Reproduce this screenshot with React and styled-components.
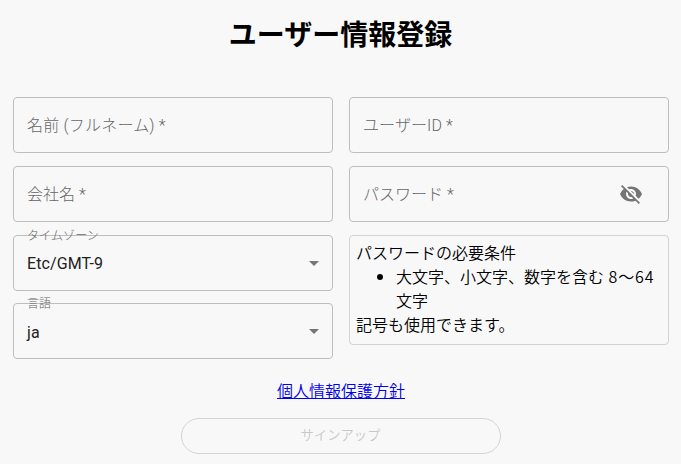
import React, { useState } from "react";
import styled, { createGlobalStyle } from "styled-components";
import { MdVisibilityOff, MdArrowDropDown } from "react-icons/md";

const GlobalStyle = createGlobalStyle`
  body {
    margin: 0;
    background: #f8f8f8;
    font-family: "Noto Sans CJK JP", sans-serif;
    font-size: 16px;
    font-weight: 350;
    line-height: 24px;
    color: #000;
  }
  * {
    box-sizing: border-box;
  }
`;

const Page = styled.div`
  display: flex;
  flex-direction: column;
  align-items: center;
  height: 464px;
  overflow: hidden;
`;

const Title = styled.h1`
  margin: 12px 0 0;
  height: 85px;
  font-size: 28px;
  line-height: 42px;
  font-weight: 700;
`;

const Columns = styled.div`
  display: grid;
  grid-template-columns: 320px 320px;
  gap: 16px;
  width: 656px;
  margin-left: 1px;
`;

const Column = styled.div`
  display: flex;
  flex-direction: column;
  align-items: stretch;
  gap: 13px;
`;

const Field = styled.div`
  position: relative;
  display: flex;
  align-items: center;
  justify-content: space-between;
  height: 56px;
  padding: 0 ${(props) => props.$end || 14}px 0 13px;
  margin-top: ${(props) => props.$shift || 0}px;
  border: 1px solid #bebebe;
  border-radius: 4px;
`;

const Placeholder = styled.label`
  font-family: Roboto, "Noto Sans CJK JP", sans-serif;
  font-weight: 300;
  line-height: 23px;
  letter-spacing: ${(props) => props.$spacing || 0}px;
  color: #666;
`;

const FloatingLabel = styled.label`
  position: absolute;
  top: -8px;
  left: 13px;
  font-family: Roboto, "Noto Sans CJK JP", sans-serif;
  font-size: 12px;
  font-weight: 300;
  line-height: 17px;
  letter-spacing: 0.1px;
  color: #666;
`;

const Value = styled.span`
  padding-top: ${(props) => props.$drop || 2}px;
  font-family: Roboto, "Noto Sans CJK JP", sans-serif;
  font-weight: 400;
  letter-spacing: 0.1px;
  color: #212121;
`;

const IconButton = styled.button`
  display: flex;
  padding: 0;
  border: none;
  background: none;
  color: #757575;
`;

const Requirements = styled.div`
  height: 110px;
  padding: 4px 6px;
  border: 1px solid #d3d3d3;
  border-radius: 4px;
`;

const RuleList = styled.ul`
  margin: 0;
  padding-left: 40px;
`;

const Range = styled.span`
  letter-spacing: 0.9px;
`;

const PolicyLink = styled.a`
  margin: 19px 0 0 1px;
  color: #0000ee;
  text-decoration: underline;
`;

const SignUpButton = styled.button`
  width: 320px;
  height: 36px;
  margin-top: 16px;
  padding: 0 0 3px;
  border: 1px solid #d3d3d3;
  border-radius: 18px;
  background: none;
  font-family: "Noto Sans CJK JP", sans-serif;
  font-size: 13.333px;
  font-weight: 350;
  color: #c8c8c8;
`;

function SelectField({ label, value, shift, drop }) {
  return (
    <Field $end={6} $shift={shift}>
      <FloatingLabel>{label}</FloatingLabel>
      <Value $drop={drop}>{value}</Value>
      <MdArrowDropDown size={24} color="#757575" />
    </Field>
  );
}

export default function App() {
  const [timezone] = useState("Etc/GMT-9");
  const [language] = useState("ja");

  return (
    <>
      <GlobalStyle />
      <Page>
        <Title>ユーザー情報登録</Title>
        <Columns>
          <Column>
            <Field>
              <Placeholder $spacing={0.2}>名前 (フルネーム) *</Placeholder>
            </Field>
            <Field>
              <Placeholder>会社名 *</Placeholder>
            </Field>
            <SelectField label="タイムゾーン" value={timezone} />
            <SelectField label="言語" value={language} shift={-1} drop={4} />
          </Column>
          <Column>
            <Field>
              <Placeholder $spacing={0.1}>ユーザーID *</Placeholder>
            </Field>
            <Field $end={25}>
              <Placeholder>パスワード *</Placeholder>
              <IconButton type="button">
                <MdVisibilityOff size={24} />
              </IconButton>
            </Field>
            <Requirements>
              パスワードの必要条件
              <RuleList>
                <li>
                  大文字、小文字、数字を含む<Range> 8～64</Range>文字
                </li>
              </RuleList>
              記号も使用できます。
            </Requirements>
          </Column>
        </Columns>
        <PolicyLink href="#">個人情報保護方針</PolicyLink>
        <SignUpButton disabled>サインアップ</SignUpButton>
      </Page>
    </>
  );
}
